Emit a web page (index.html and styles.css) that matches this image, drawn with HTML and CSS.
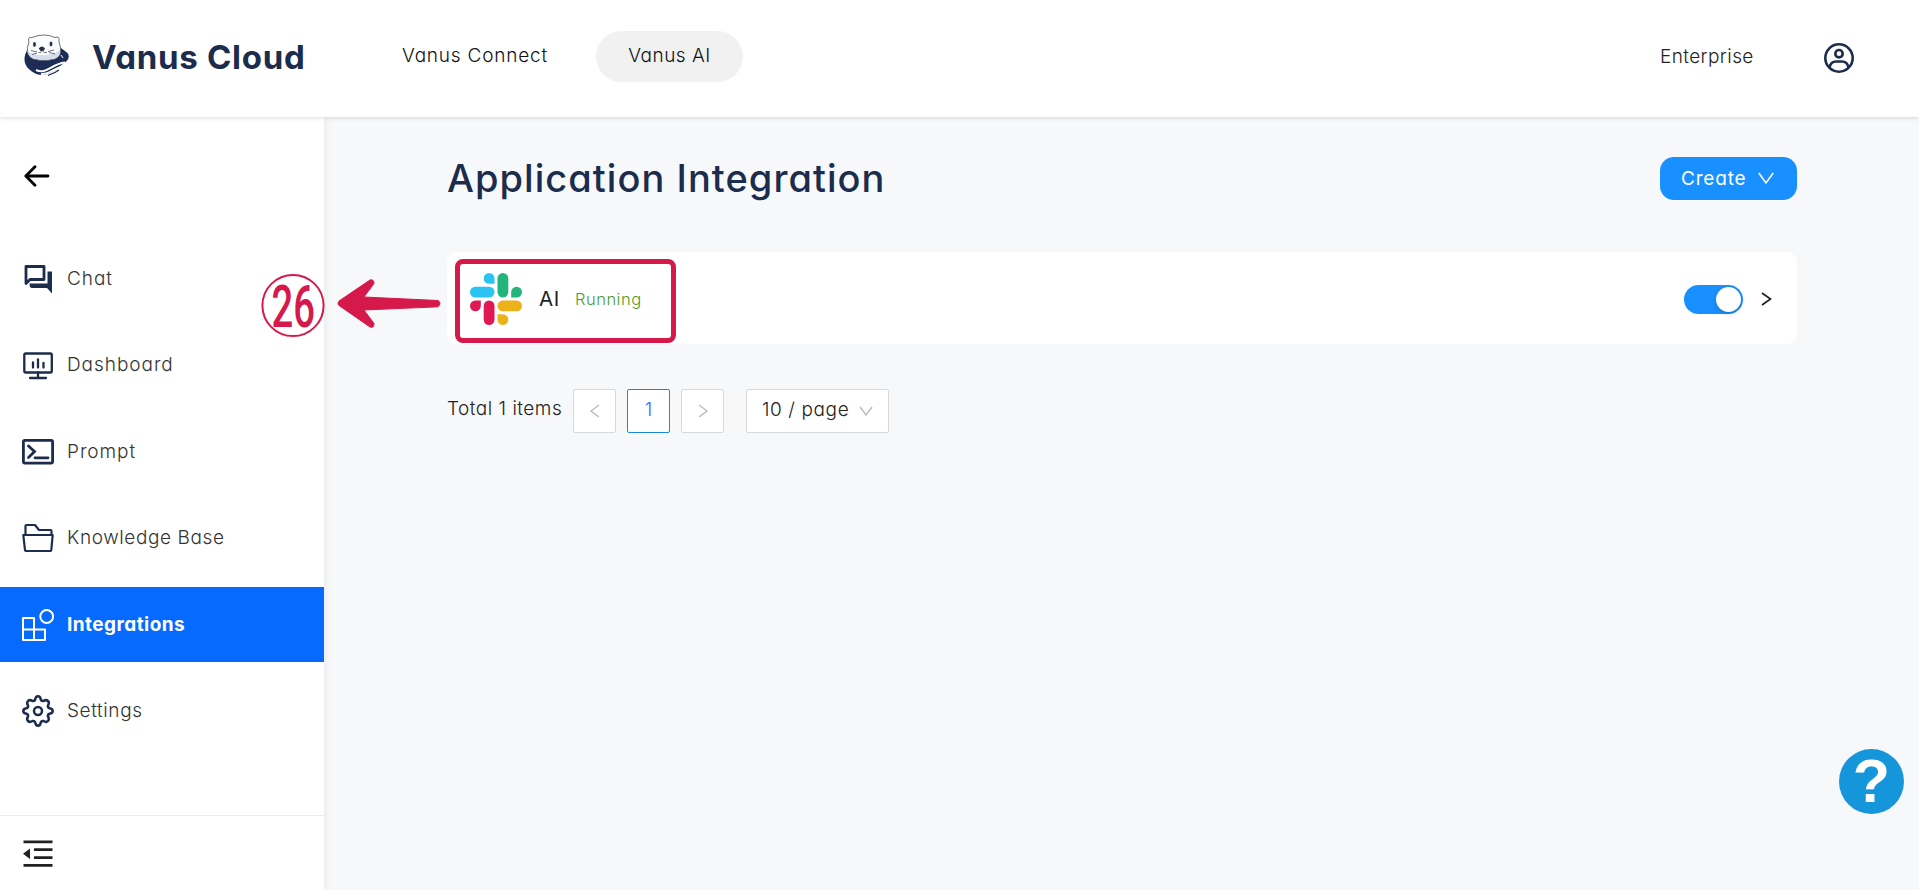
FILE: index.html
```html
<!DOCTYPE html>
<html lang="en">
<head>
<meta charset="utf-8">
<title>Vanus Cloud</title>
<link rel="stylesheet" href="styles.css">
</head>
<body>
<header class="header">
  <svg class="logo" width="46" height="43" viewBox="0 0 46 43">
    <path d="M4 15C-1 22-1 31 6 36C10 40 17 42 22 40.500C31 38 35 32 41 28.500Q47 24 43.500 19L37 14Q30 25 18 24Q9 23 4 15Z" fill="#1c2c55"/>
    <path d="M12 36C22 41 27 30 41 28.500M17 40C26 41 29 34 40 32" fill="none" stroke="#fff" stroke-width="2"/>
    <path d="M24 41.500Q31 39 35 36" fill="none" stroke="#1c2c55" stroke-width="1.300"/>
    <path d="M5 8Q3 3 8 3.500Q20-1.500 31 3.500Q36 1.500 35 8Q40 21 31 25Q20 28 9 25Q0 20 5 8Z" fill="#fbfcfd" stroke="#4a4e59" stroke-width=".8"/>
    <path d="M3.500 17Q9 21 19 21Q30 21 36 16Q37 22 31 24.600Q20 27.500 9 24.600Q4 22 3.500 17Z" fill="#d5deea"/>
    <g fill="#26304b"><ellipse cx="10.500" cy="10.500" rx="1.400" ry="2.400"/><ellipse cx="27" cy="10" rx="1.400" ry="2.400"/><path d="M14.800 14.500Q18 10.500 21 14.500L19.500 17H16.500Z"/></g>
    <path d="M18 16Q17 20 14.500 18.500M18 16Q20 20 23 18.500M7 16.500l6 1.500M8 20.500l5-1.500M30 16l-6 1.500M31 20l-6-1.500" fill="none" stroke="#4a4e59" stroke-width=".8"/>
    <path d="M37 21l2 3" stroke="#fff" stroke-width="1"/>
  </svg>
  <span class="brand">Vanus Cloud</span>
  <nav class="tabs">
    <a class="tab tab-connect">Vanus Connect</a>
    <a class="tab tab-active">Vanus AI</a>
  </nav>
  <span class="plan">Enterprise</span>
  <svg class="user" width="32" height="32" viewBox="0 0 32 32" fill="none" stroke="#1c2c4c" stroke-width="2.600"><circle cx="16" cy="16" r="13.700"/><circle cx="16" cy="11.700" r="3.700"/><path d="M6.500 25.500C7.500 20.500 10 19.500 13 19.500h6c3 0 5.500 1 6.500 6"/></svg>
</header>
<div class="body">
  <aside class="side">
    <svg class="back" width="26" height="22" viewBox="0 0 26 22" fill="none" stroke="#000" stroke-width="2.800" stroke-linecap="round" stroke-linejoin="round"><path d="M11 1.800L1.800 11l9.200 9.200M2 11h22"/></svg>
    <nav class="menu">
      <a class="item"><svg width="32" height="32" viewBox="0 0 32 32"><path d="M4 3.500h18v13H8L4 20.500z" fill="none" stroke="#1c2c4c" stroke-width="2.800" stroke-linejoin="round"/><path d="M25.500 8.500h4.500V30.500L25 25H10q-2.500 0-2.500-4.500H25.500z" fill="#1c2c4c"/></svg><span class="label wide">Chat</span></a>
      <a class="item"><svg width="32" height="32" viewBox="0 0 32 32" fill="none" stroke="#1c2c4c" stroke-width="2.300" stroke-linecap="round"><rect x="2.300" y="4.500" width="27.500" height="19" rx="1.500"/><path d="M11 13.500v5M16 10.500v8M21.500 14v4.500M16 23.500v5M8 29h16"/></svg><span class="label wide">Dashboard</span></a>
      <a class="item"><svg width="32" height="32" viewBox="0 0 32 32" fill="none" stroke="#1c2c4c" stroke-width="2.800"><rect x="1.400" y="4.300" width="29.200" height="22.800" rx="1.500"/><path d="M6.500 10l6 5.500-6 6M13 21.800h13" stroke-linecap="round"/></svg><span class="label wide">Prompt</span></a>
      <a class="item"><svg width="32" height="32" viewBox="0 0 32 32" fill="none" stroke="#1c2c4c" stroke-width="2.200" stroke-linejoin="round"><path d="M3.500 12.500V4q0-1 1-1H13l4 5h11.500q1 0 1 1v3.500M1.300 13h29.400L29.300 28q0 1-1 1H4q-1 0-1-1z"/></svg><span class="label">Knowledge Base</span></a>
      <a class="item item-on"><svg width="32" height="32" viewBox="0 0 32 32" fill="none" stroke="#fff" stroke-width="2"><circle cx="24.700" cy="7.500" r="6.400"/><path d="M1 9h11v11.500h11V31H1zM1 20.500h11V31" stroke-linejoin="round"/></svg><span class="label">Integrations</span></a>
      <a class="item"><svg width="32" height="32" viewBox="0 0 32 32" fill="none" stroke="#1c2c4c" stroke-width="2.500" stroke-linejoin="round"><circle cx="16" cy="16" r="4"/><path d="M13.200 4.500Q13.700 1.300 16 1.300T18.800 4.500Q19.500 6.500 21.500 6Q24.200 4.300 26 6T26 10.500Q25.500 12.500 27.500 13.200Q30.700 13.700 30.700 16T27.500 18.800Q25.500 19.500 26 21.500Q27.700 24.200 26 26T21.500 26Q19.500 25.500 18.800 27.500Q18.300 30.700 16 30.700T13.200 27.500Q12.500 25.500 10.500 26Q7.800 27.700 6 26T6 21.500Q6.500 19.500 4.500 18.800Q1.300 18.300 1.300 16T4.500 13.200Q6.500 12.500 6 10.500Q4.300 7.800 6 6T10.500 6Q12.500 6.500 13.200 4.500Z"/></svg><span class="label">Settings</span></a>
    </nav>
    <div class="fold"><svg width="30" height="28" viewBox="0 0 30 28" fill="#222"><path d="M.5.500h29v2.700H.5zM11 8.300h18.500V11H11zM11 16.200h18.500v2.700H11zM.5 24h29v2.700H.5zM7 8.500v10.500L0 13.700z"/></svg></div>
  </aside>
  <main class="main">
    <div class="heading">
      <h1 class="title">Application Integration</h1>
      <button class="create"><span>Create</span><svg class="caret" width="16" height="13" viewBox="0 0 16 13" fill="none" stroke="#fff" stroke-width="1.600"><path d="M.8 1l7.200 10L15.200 1"/></svg></button>
    </div>
    <section class="card">
      <div class="app">
        <svg width="52" height="52" viewBox="0 0 52 52">
          <g fill="#2bc3f2"><path d="M24.500 10.800h-5.400a5.400 5.400 0 1 1 5.400-5.400z"/><rect y="13.700" width="24.500" height="10.800" rx="5.400"/></g>
          <g fill="#23b57c"><path d="M41.200 24.500v-5.400a5.400 5.400 0 1 1 5.400 5.400z"/><rect x="27.500" width="10.800" height="24.500" rx="5.400"/></g>
          <g fill="#ecb21a"><path d="M27.500 41.200h5.400a5.400 5.400 0 1 1-5.400 5.400z"/><rect x="27.500" y="27.500" width="24.500" height="10.800" rx="5.400"/></g>
          <g fill="#e01955"><path d="M10.800 27.500v5.400a5.400 5.400 0 1 1-5.400-5.400z"/><rect x="13.700" y="27.500" width="10.800" height="24.500" rx="5.400"/></g>
        </svg>
        <span class="name">AI</span><span class="state">Running</span>
      </div>
      <div class="actions"><span class="switch"><i class="knob"></i></span><svg width="11" height="14" viewBox="0 0 11 14" fill="none" stroke="#222" stroke-width="1.700"><path d="M1 1l8.500 6L1 13"/></svg></div>
      <svg class="note" width="260" height="94" viewBox="0 0 260 94">
        <circle cx="38" cy="53.500" r="30.600" fill="none" stroke="#d51a4b" stroke-width="2"/>
        <text class="num" x="16.500" y="74.500" textLength="43.500" lengthAdjust="spacingAndGlyphs">26</text>
        <path d="M84 49L115 28Q119 27 119 31.500L109 45L183 48.500Q187 51 183 54.800L109 58L119 71.500Q119 76.500 115 75L84 53.500Q82 51.300 84 49Z" fill="#d51a4b" stroke="#d51a4b"/>
      </svg>
    </section>
    <div class="pager">
      <span class="total">Total 1 items</span>
      <span class="pg"><svg width="10" height="14" viewBox="0 0 10 14" fill="none" stroke="#bbb" stroke-width="1.400"><path d="M9 1L1 7l8 6"/></svg></span>
      <span class="pg pg-on">1</span>
      <span class="pg"><svg width="10" height="14" viewBox="0 0 10 14" fill="none" stroke="#bbb" stroke-width="1.400"><path d="M1 1l8 6-8 6"/></svg></span>
      <span class="pg size"><span class="size-text">10 / page</span><svg width="14" height="10" viewBox="0 0 14 10" fill="none" stroke="#bbb" stroke-width="1.400"><path d="M1 1l6 8 6-8"/></svg></span>
    </div>
  </main>
</div>
<a class="help">?</a>
</body>
</html>
```
FILE: styles.css
```css
* { box-sizing: border-box; }
body { margin: 0; height: 890px; overflow: hidden; display: flex; flex-direction: column; background: #f6f8fa; color: #222; font: 300 19px/28px Inter, "Open Sans", sans-serif; font-feature-settings: "cv11"; white-space: nowrap; }
svg { flex: none; display: block; }
.header { height: 117px; flex: none; display: flex; align-items: center; padding: 0 64px 3px 24px; background: #fff; box-shadow: 0 1px 4px rgba(0,0,0,.14); position: relative; z-index: 2; }
.logo { margin-top: -4px; }
.brand { width: 286px; margin: 0 0 0 22px; font-size: 33px; font-weight: 650; letter-spacing: .7px; color: #1c2c4c; }
.tabs { display: flex; align-items: center; margin-top: -2px; letter-spacing: .8px; }
.tab { color: #111; }
.tab-connect { width: 218px; padding-left: 24px; }
.tab-active { width: 147px; height: 51px; line-height: 49px; border-radius: 26px; background: #f1f1f1; text-align: center; letter-spacing: .5px; }
.plan { margin: 0 0 0 auto; width: 163px; letter-spacing: .4px; }
.user { margin-top: 1px; }
.body { flex: 1; display: flex; min-height: 0; }
.side { width: 324px; flex: none; background: #fff; display: flex; flex-direction: column; box-shadow: 0 0 8px rgba(0,0,0,.08); }
.back { margin: 48px 0 0 24px; }
.menu { display: flex; flex-direction: column; gap: 11.500px; margin-top: 54px; }
.item { height: 75px; display: flex; align-items: center; gap: 13px; padding-left: 22px; color: #333; letter-spacing: .6px; }
.wide { letter-spacing: .95px; }
.item-on { background: #066aff; color: #fff; font-weight: 700; letter-spacing: .45px; }
.fold { margin-top: auto; height: 75px; border-top: 1px solid #e9eaeb; padding: 24px 0 0 23px; }
.main { flex: 1; padding: 36px 122px 0 123px; }
.heading { display: flex; justify-content: space-between; align-items: flex-start; height: 99px; }
.title { margin: 0; font-size: 38px; line-height: 51px; font-weight: 460; letter-spacing: 1.050px; color: #1c2c4c; }
.create { width: 137px; height: 43px; margin-top: 4px; border: 0; border-radius: 14px; background: #1890ff; color: #fff; font: inherit; font-weight: 400; letter-spacing: .8px; display: flex; align-items: center; gap: 12px; padding: 1px 0 0 21px; }
.caret { margin-top: -2px; }
.card { position: relative; height: 92px; background: #fff; border-radius: 10px; display: flex; justify-content: space-between; align-items: center; padding: 0 25px 0 8px; }
.app { width: 221px; height: 84px; margin-top: 6px; border: 5px solid #d51a4b; border-radius: 8px; display: flex; align-items: center; padding: 0 0 4px 10px; }
.name { width: 36px; margin-left: 17px; font-size: 20.500px; font-weight: 400; letter-spacing: .5px; }
.state { font-size: 16.500px; letter-spacing: .5px; color: #4a9b2e; }
.actions { display: flex; align-items: center; gap: 18px; margin-top: 2px; }
.switch { width: 59px; height: 29px; border-radius: 15px; background: #1890ff; padding: 2px; display: flex; justify-content: flex-end; }
.knob { width: 25px; height: 25px; border-radius: 50%; background: #fff; box-shadow: 0 2px 4px rgba(0,35,11,.2); }
.note { position: absolute; left: -192px; top: 0; }
.num { font: 500 60px Roboto, sans-serif; fill: #d51a4b; }
.pager { display: flex; margin-top: 45px; gap: 11px; }
.total { width: 115px; line-height: 39px; letter-spacing: .5px; }
.pg { width: 43px; height: 44px; border: 1px solid #d9d9d9; border-radius: 2px; background: #fff; display: flex; align-items: center; justify-content: center; }
.pg-on { border-color: #1c87e0; color: #2f6fff; padding-bottom: 2px; }
.size { width: 143px; margin-left: 11px; justify-content: space-between; padding: 0 15px; }
.size-text { letter-spacing: .6px; margin-top: -3px; }
.help { position: absolute; left: 1839px; top: 749px; width: 65px; height: 65px; border-radius: 50%; background: #1596db; color: #fff; font: 700 61px/65px "Liberation Sans", sans-serif; text-align: center; }
```
